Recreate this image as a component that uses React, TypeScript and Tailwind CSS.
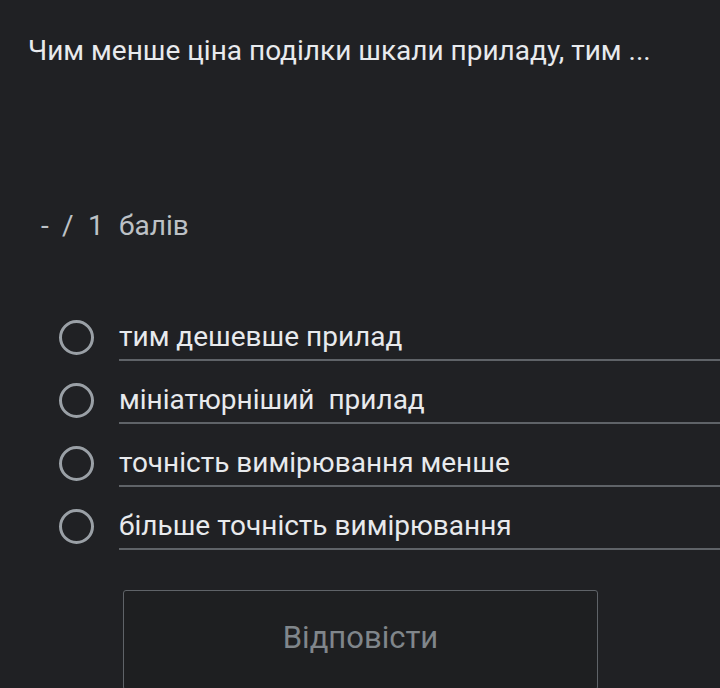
const options = [
  "тим дешевше прилад",
  "мініатюрніший  прилад",
  "точність вимірювання менше",
  "більше точність вимірювання",
];

export default function App() {
  return (
    <div className="h-[688px] w-[720px] overflow-hidden bg-[#202124] font-['Roboto',sans-serif] text-[#e8eaed]">
      <div className="pl-[28px] pt-[34px] text-[28px] leading-[34px]">
        Чим менше ціна поділки шкали приладу, тим ...
      </div>

      <div className="mt-[141px] flex pl-[41px] text-[28px] leading-[34px] text-[#bdc1c6]">
        <span className="w-[21px]">-</span>
        <span className="w-[26px]">/</span>
        <span className="w-[31px]">1</span>
        <span>балів</span>
      </div>

      <div className="mt-[63px] flex flex-col">
        {options.map((label) => (
          <div key={label} className="flex h-[63px] items-start pl-[59px]">
            <div className="flex h-[63px] w-[35px] shrink-0 items-center justify-center">
              <span className="h-[35px] w-[35px] rounded-full border-[3.5px] border-[#9aa0a6]" />
            </div>
            <div className="ml-[25px] h-[55px] flex-1 whitespace-pre border-b-2 border-[#5f6368] pt-[14px] text-[28px] leading-[34px]">
              {label}
            </div>
          </div>
        ))}
      </div>

      <div className="ml-[123px] mt-[32px] flex h-[100px] w-[475px] items-center justify-center rounded-[3px] border border-[#5f6368] bg-[#1e1f21] pb-[4px] text-[31px] text-[#80868b]">
        Відповісти
      </div>
    </div>
  );
}
